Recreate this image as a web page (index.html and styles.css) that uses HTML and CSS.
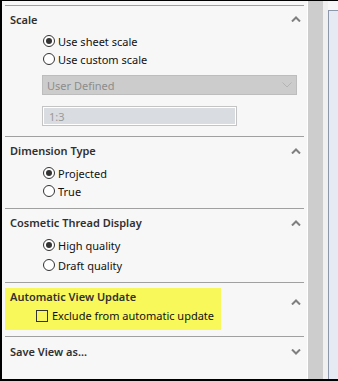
FILE: index.html
```html
<!DOCTYPE html>
<html lang="en">
<head>
    <meta charset="UTF-8">
    <title>View Properties</title>
    <link rel="stylesheet" href="styles.css">
</head>
<body>
    <div class="frame">
        <div class="panel">
            <div class="section scale">
                <div class="section-head">
                    <span class="title">Scale</span>
                    <svg class="chev" width="10" height="6" viewBox="0 0 10 6"><path d="M1 5.5 L5 1.5 L9 5.5" fill="none" stroke="#7f7f7f" stroke-width="2"/></svg>
                </div>
                <div class="options">
                    <label class="opt"><span class="radio on"></span>Use sheet scale</label>
                    <label class="opt"><span class="radio"></span>Use custom scale</label>
                </div>
                <div class="select">
                    <span>User Defined</span>
                    <svg width="10" height="6" viewBox="0 0 10 6"><path d="M0.5 0.5 L5 5 L9.5 0.5" fill="none" stroke="#b4b4b4" stroke-width="1"/></svg>
                </div>
                <div class="input">1:3</div>
            </div>

            <div class="section">
                <div class="section-head">
                    <span class="title">Dimension Type</span>
                    <svg class="chev" width="10" height="6" viewBox="0 0 10 6"><path d="M1 5.5 L5 1.5 L9 5.5" fill="none" stroke="#7f7f7f" stroke-width="2"/></svg>
                </div>
                <div class="options">
                    <label class="opt"><span class="radio on"></span>Projected</label>
                    <label class="opt"><span class="radio"></span>True</label>
                </div>
            </div>

            <div class="section">
                <div class="section-head">
                    <span class="title">Cosmetic Thread Display</span>
                    <svg class="chev" width="10" height="6" viewBox="0 0 10 6"><path d="M1 5.5 L5 1.5 L9 5.5" fill="none" stroke="#7f7f7f" stroke-width="2"/></svg>
                </div>
                <div class="options wide">
                    <label class="opt"><span class="radio on"></span>High quality</label>
                    <label class="opt"><span class="radio"></span>Draft quality</label>
                </div>
            </div>

            <div class="section update">
                <div class="marked">
                    <span class="title">Automatic View Update</span>
                    <label class="check-row"><span class="check"></span>Exclude from automatic update</label>
                </div>
                <svg class="chev" width="10" height="6" viewBox="0 0 10 6"><path d="M1 5.5 L5 1.5 L9 5.5" fill="none" stroke="#7f7f7f" stroke-width="2"/></svg>
            </div>

            <div class="section last">
                <div class="section-head">
                    <span class="title">Save View as...</span>
                    <svg class="chev" width="10" height="6" viewBox="0 0 10 6"><path d="M1 0.5 L5 4.5 L9 0.5" fill="none" stroke="#7f7f7f" stroke-width="2"/></svg>
                </div>
            </div>
        </div>
        <div class="scrollbar"></div>
        <div class="gutter"></div>
        <div class="viewport"></div>
    </div>
</body>
</html>
```

FILE: styles.css
```css
* {
    margin: 0;
    padding: 0;
    box-sizing: border-box;
    font-family: "Noto Sans", "Open Sans", sans-serif;
}
body, html {
    width: 100%;
    height: 100%;
    overflow: hidden;
    background: #fff;
}
.frame {
    width: 338px;
    height: 381px;
    display: flex;
    border-top: 1px solid #000;
    border-left: 2px solid #000;
    border-bottom: 2px solid #000;
    background: #f7f7f7;
}
.panel {
    width: 306px;
    padding: 4px 3px 0 3px;
    background: #f7f7f7;
    border-right: 1px solid #ffffff;
}
.section {
    border-top: 1px solid #a0a0a0;
    padding-bottom: 8px;
}
.section-head {
    height: 27px;
    display: flex;
    align-items: center;
    justify-content: space-between;
    padding: 0 3px 0 5px;
}
.title {
    font-size: 11px;
    font-weight: 600;
    color: #303030;
    white-space: nowrap;
}
.options {
    display: flex;
    flex-direction: column;
    padding-left: 38px;
}
.options.wide {
    gap: 2px;
}
.opt {
    height: 18px;
    display: flex;
    align-items: center;
    gap: 3px;
    font-size: 11px;
    color: #111;
    white-space: nowrap;
}
.radio {
    width: 12px;
    height: 12px;
    border: 1px solid #333;
    border-radius: 50%;
    background: #fff;
    display: flex;
    align-items: center;
    justify-content: center;
}
.radio.on::after {
    content: "";
    width: 6px;
    height: 6px;
    border-radius: 50%;
    background: #333;
}
.scale {
    padding-bottom: 10px;
}
.scale .section-head {
    height: 26px;
}
.select {
    margin: 7px 0 0 37px;
    width: 255px;
    height: 20px;
    background: #cccccc;
    border: 1px solid #bdbdbd;
    display: flex;
    align-items: center;
    justify-content: space-between;
    padding: 0 4px 0 4px;
    font-size: 11px;
    color: #8c8c8c;
}
.input {
    margin: 11px 0 0 37px;
    width: 195px;
    height: 20px;
    background: #d9dce1;
    border: 1px solid #c4c4c4;
    box-shadow: inset 0 0 0 1px #fff;
    display: flex;
    align-items: center;
    padding-left: 6px;
    font-size: 11px;
    color: #9a9a9a;
}
.update {
    display: flex;
    justify-content: space-between;
    align-items: flex-start;
    padding: 5px 3px 6px 0;
}
.update .chev {
    margin-top: 11px;
}
.marked {
    width: 216px;
    height: 42px;
    background: #f9f85a;
    padding: 1px 0 0 5px;
    display: flex;
    flex-direction: column;
}
.check-row {
    margin: 4px 0 0 26px;
    display: flex;
    align-items: center;
    gap: 4px;
    font-size: 11px;
    color: #111;
    white-space: nowrap;
}
.check {
    width: 12px;
    height: 12px;
    border: 1px solid #333;
    background: #f9f85a;
}
.last {
    padding-bottom: 0;
}
.last .section-head {
    height: 29px;
}
.scrollbar {
    width: 15px;
    background: #cdcdcd;
}
.gutter {
    width: 5px;
    background: #f0f0f0;
}
.viewport {
    flex: 1;
    margin-top: 9px;
    background: #e6eaf3;
    border-top: 1px solid #8c98aa;
    border-left: 1px solid #8c98aa;
}
```
